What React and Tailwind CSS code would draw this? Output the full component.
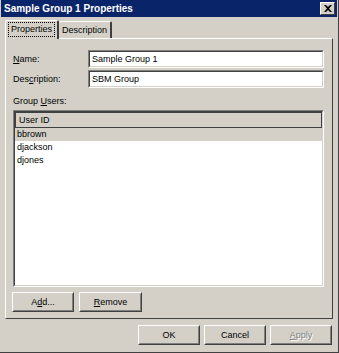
import React from "react";

const sunken =
  "border border-t-[#808080] border-l-[#808080] border-r-white border-b-white";
const sunkenInner =
  "border border-t-[#404040] border-l-[#404040] border-r-[#d4d0c8] border-b-[#d4d0c8]";

const Button = ({ children, className = "", disabled }) => (
  <div
    className={`border border-t-white border-l-white border-r-[#404040] border-b-[#404040] ${className}`}
  >
    <div className="h-full border border-t-[#d4d0c8] border-l-[#d4d0c8] border-r-[#808080] border-b-[#808080] flex items-center justify-center">
      {disabled ? (
        <span className="text-[#808080] [text-shadow:1px_1px_0_#ffffff]">{children}</span>
      ) : (
        <span>{children}</span>
      )}
    </div>
  </div>
);

const Field = ({ label, value }) => (
  <div className="flex items-center h-[18px]">
    <div className="w-[75px]">{label}</div>
    <div className={`flex-1 h-[18px] ${sunken}`}>
      <div className={`h-full bg-white px-[2px] flex items-center ${sunkenInner}`}>
        {value}
      </div>
    </div>
  </div>
);

const users = ["bbrown", "djackson", "djones"];

export default function App() {
  return (
    <div className="w-[339px] h-[353px] bg-[#d4d0c8] text-black text-[9px] leading-none font-['Liberation_Sans',Arial,sans-serif] flex flex-col border-r border-b border-[#404040]">
      {/* title bar */}
      <div className="h-[17px] mx-[1px] bg-[#0a246a] flex items-center justify-between pl-[3px] pr-[2px]">
        <span className="text-white font-bold text-[10px]">Sample Group 1 Properties</span>
        <div className="w-[15px] h-[13px] bg-[#d4d0c8] border border-t-white border-l-white border-r-[#404040] border-b-[#404040] flex items-center justify-center">
          <svg width="8" height="7" viewBox="0 0 8 7">
            <path d="M0 0h2l2 2 2-2h2L5 3.5 8 7H6L4 5 2 7H0l3-3.5z" fill="#000" />
          </svg>
        </div>
      </div>

      <div className="px-[5px] pt-[2px]">
        {/* tabs */}
        <div className="flex items-end h-[19px] relative z-10">
          <div className="h-[19px] w-[54px] shrink-0 bg-[#d4d0c8] border-t border-l border-white border-r-2 border-r-[#404040] rounded-t-[2px] flex items-center justify-center -mb-[1px] pb-[1px]">
            <span className="border border-dotted border-black px-[2px] py-[2px]">Properties</span>
          </div>
          <div className="h-[17px] w-[53px] shrink-0 border-t border-white border-r-2 border-r-[#404040] rounded-t-[2px] flex items-center justify-center">
            Description
          </div>
        </div>

        {/* panel */}
        <div className="h-[281px] border border-t-white border-l-white border-r-[#404040] border-b-[#404040] pl-[7px] pr-[8px] pt-[11px] flex flex-col">
          <div className="flex flex-col gap-[2px]">
            <Field label={<span><u>N</u>ame:</span>} value="Sample Group 1" />
            <Field label={<span>Des<u>c</u>ription:</span>} value="SBM Group" />
          </div>

          <div className="mt-[9px] h-[12px]">
            Group <u>U</u>sers:
          </div>

          <div className={`mt-[1px] h-[177px] ${sunken}`}>
            <div className={`h-full bg-white ${sunkenInner}`}>
              <div className="h-[16px] bg-[#d4d0c8] border border-[#404040] flex items-center pl-[3px]">
                User ID
              </div>
              {users.map((u, i) => (
                <div
                  key={u}
                  className={`h-[13px] flex items-center pl-[2px] ${i === 0 ? "bg-[#d4d0c8]" : ""}`}
                >
                  {u}
                </div>
              ))}
            </div>
          </div>

          <div className="mt-[5px] flex gap-[5px] -ml-[1px]">
            <Button className="w-[62px] h-[20px]">
              A<u>d</u>d...
            </Button>
            <Button className="w-[63px] h-[20px]">
              <u>R</u>emove
            </Button>
          </div>
        </div>

        {/* footer */}
        <div className="flex justify-end gap-[4px] mt-[6px] pr-[1px]">
          <Button className="w-[62px] h-[20px]">OK</Button>
          <Button className="w-[62px] h-[20px]">Cancel</Button>
          <Button className="w-[62px] h-[20px]" disabled>
            <u>A</u>pply
          </Button>
        </div>
      </div>
    </div>
  );
}
